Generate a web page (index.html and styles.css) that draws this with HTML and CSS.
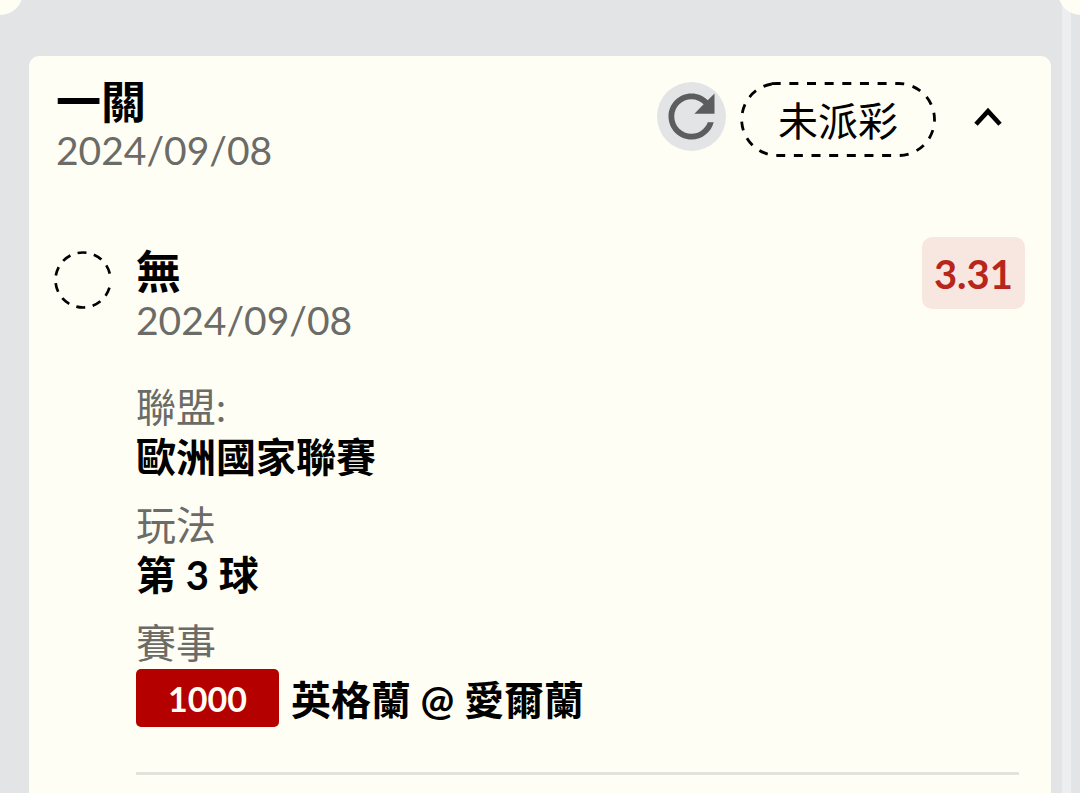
FILE: index.html
```html
<!DOCTYPE html>
<html lang="zh-Hant">
<head>
<meta charset="utf-8">
<meta name="viewport" content="width=device-width, initial-scale=1">
<title>一關</title>
<link rel="stylesheet" href="styles.css">
</head>
<body>
<div class="page">
  <div class="scroll-track"></div>
  <span class="notch notch-left"></span>
  <span class="notch notch-right"></span>
  <main class="card">
    <header class="card-header">
      <div class="heading">
        <h1 class="title">一關</h1>
        <time class="date" datetime="2024-09-08">2024/09/08</time>
      </div>
      <div class="actions">
        <button class="refresh" type="button" aria-label="重新整理">
          <svg width="69" height="69" viewBox="0 0 24 24" aria-hidden="true">
            <path d="M17.65 6.35C16.2 4.9 14.21 4 12 4c-4.42 0-7.99 3.58-7.99 8s3.57 8 7.99 8c3.73 0 6.84-2.55 7.73-6h-2.08c-.82 2.33-3.04 4-5.65 4-3.31 0-6-2.69-6-6s2.69-6 6-6c1.66 0 3.14.69 4.22 1.78L13 11h7V4l-2.35 2.35z" fill="#5b5d5f"/>
          </svg>
        </button>
        <button class="status" type="button">
          <svg class="status-outline" width="196" height="75" viewBox="0 0 196 75" aria-hidden="true">
            <path d="M31.7 1.6Q34 1.5 37.5 1.5H158.5A36 36 0 0 1 158.5 73.5H37.5A36 36 0 0 1 31.7 2" fill="none" stroke="#000" stroke-width="2.8" stroke-dasharray="9 8.65"/>
          </svg>
          <span>未派彩</span>
        </button>
        <button class="toggle" type="button" aria-label="收合">
          <svg width="28" height="20" viewBox="0 0 28 20" aria-hidden="true">
            <path d="M2 17.2 14 4.2 26 17.2" fill="none" stroke="#000" stroke-width="4.6"/>
          </svg>
        </button>
      </div>
    </header>

    <section class="bet">
      <svg class="pending" width="58" height="58" viewBox="0 0 58 58" aria-hidden="true">
        <circle cx="29" cy="29" r="27.5" fill="none" stroke="#000" stroke-width="2.7" stroke-dasharray="9 7.6" stroke-dashoffset="-7.7"/>
      </svg>
      <div class="bet-body">
        <div class="bet-top">
          <div class="heading">
            <h2 class="title">無</h2>
            <time class="date" datetime="2024-09-08">2024/09/08</time>
          </div>
          <span class="odds">3.31</span>
        </div>
        <dl class="details">
          <div><dt>聯盟:</dt><dd>歐洲國家聯賽</dd></div>
          <div><dt>玩法</dt><dd>第 3 球</dd></div>
          <div><dt>賽事</dt><dd class="match"><span class="code">1000</span><span class="teams">英格蘭 @ 愛爾蘭</span></dd></div>
        </dl>
        <hr class="divider">
      </div>
    </section>
  </main>
</div>
</body>
</html>
```
FILE: styles.css
```css
* {
  box-sizing: border-box;
}

body {
  margin: 0;
  background: #e3e4e6;
  color: #000;
  font-family: Lato, "Noto Sans CJK TC", sans-serif;
  font-size: 40px;
}

h1, h2, dl, dd {
  margin: 0;
}

button {
  margin: 0;
  padding: 0;
  border: 0;
  background: none;
  color: inherit;
  font: inherit;
  cursor: pointer;
}

svg {
  display: block;
}

.page {
  position: relative;
  display: flex;
  min-height: 100vh;
  padding: 56px 29px 0;
  overflow: hidden;
}

.scroll-track {
  position: absolute;
  top: 0;
  right: 9px;
  bottom: 0;
  width: 9px;
  background: #edeef0;
}

.notch {
  position: absolute;
  top: -31px;
  width: 46px;
  height: 46px;
  border-radius: 50%;
  background: #fffef5;
}

.notch-left {
  left: -23px;
}

.notch-right {
  right: -24px;
}

.card {
  flex: 1;
  min-width: 0;
  padding: 23px 26px 18px 27px;
  border-radius: 10px 10px 0 0;
  background: #fffef5;
}

.card-header,
.bet-top {
  display: flex;
  justify-content: space-between;
  align-items: flex-start;
}

.title {
  font-size: 45px;
  font-weight: 700;
  line-height: 47px;
}

.date {
  display: block;
  color: #6b6b67;
  font-size: 39px;
  line-height: 48px;
}

.actions {
  display: flex;
  align-items: flex-start;
  padding: 3px 23px 0 0;
}

.refresh {
  margin-right: 14px;
  border-radius: 50%;
  background: #e3e4e6;
}

.status {
  position: relative;
  padding: 10px 38px 7px;
  line-height: 58px;
}

.status-outline {
  position: absolute;
  inset: 0;
  width: 100%;
  height: 100%;
}

.toggle {
  margin: 25px 0 0 38px;
}

.bet {
  display: flex;
  align-items: flex-start;
  gap: 24px;
  margin-top: 63px;
}

.pending {
  flex: none;
  margin: 14px 0 0 -2px;
}

.bet-body {
  flex: 1;
  min-width: 0;
}

.bet-top .heading {
  padding-top: 12px;
}

.odds {
  padding: 5px 12px 3px;
  border-radius: 10px;
  background: #f8e7e0;
  color: #b8261b;
  font-weight: 700;
  line-height: 64px;
}

.details {
  display: grid;
  gap: 18px;
  margin-top: 38px;
  line-height: 50px;
}

.details dt {
  color: #6b6b67;
}

.details dd {
  font-weight: 700;
}

.details .match {
  display: flex;
  align-items: center;
  gap: 12px;
  margin-top: 1px;
}

.code {
  padding: 1px 32px 0;
  border-radius: 5px;
  background: #b50000;
  color: #fffef5;
  font-size: 34px;
  line-height: 57px;
}

.teams {
  padding-top: 4px;
}

.divider {
  height: 3px;
  margin: 45px 6px 0 0;
  border: 0;
  background: #e4e2dc;
}
```
